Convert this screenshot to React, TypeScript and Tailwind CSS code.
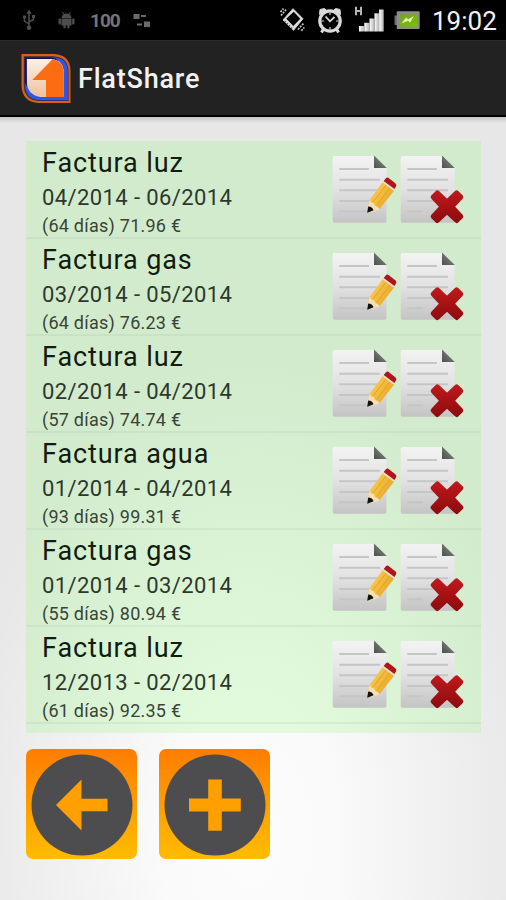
import React from 'react';

type Bill = {
  name: string;
  period: string;
  detail: string;
};

const bills: Bill[] = [
  { name: 'Factura luz', period: '04/2014 - 06/2014', detail: '(64 días) 71.96 €' },
  { name: 'Factura gas', period: '03/2014 - 05/2014', detail: '(64 días) 76.23 €' },
  { name: 'Factura luz', period: '02/2014 - 04/2014', detail: '(57 días) 74.74 €' },
  { name: 'Factura agua', period: '01/2014 - 04/2014', detail: '(93 días) 99.31 €' },
  { name: 'Factura gas', period: '01/2014 - 03/2014', detail: '(55 días) 80.94 €' },
  { name: 'Factura luz', period: '12/2013 - 02/2014', detail: '(61 días) 92.35 €' },
];

// Shared gradients, referenced by id from the icons below
function Gradients() {
  return (
    <svg className="absolute w-0 h-0" aria-hidden="true">
      <defs>
        <linearGradient id="paper" x1="0" y1="0" x2="0" y2="1">
          <stop offset="0" stopColor="#f3f3f3" />
          <stop offset="0.5" stopColor="#e2e2e2" />
          <stop offset="1" stopColor="#c4c4c4" />
        </linearGradient>
        <linearGradient id="fold" x1="0" y1="1" x2="1" y2="0">
          <stop offset="0" stopColor="#4c504c" />
          <stop offset="1" stopColor="#8b938b" />
        </linearGradient>
        <linearGradient id="wood" x1="0" y1="0" x2="1" y2="0.7">
          <stop offset="0" stopColor="#f9d470" />
          <stop offset="0.5" stopColor="#f5bd3c" />
          <stop offset="1" stopColor="#e0a028" />
        </linearGradient>
        <linearGradient id="cross" x1="0" y1="38" x2="0" y2="71" gradientUnits="userSpaceOnUse">
          <stop offset="0" stopColor="#c01a1c" />
          <stop offset="1" stopColor="#8c0b0d" />
        </linearGradient>
        <linearGradient id="cream" x1="0" y1="0" x2="0" y2="1">
          <stop offset="0" stopColor="#faf0e6" />
          <stop offset="1" stopColor="#eec29c" />
        </linearGradient>
        <linearGradient id="bars" x1="0" y1="0" x2="1" y2="0">
          <stop offset="0" stopColor="#ffffff" />
          <stop offset="1" stopColor="#b0b0b0" />
        </linearGradient>
        <linearGradient id="charge" x1="0" y1="0" x2="1" y2="1">
          <stop offset="0" stopColor="#7d9c2c" />
          <stop offset="1" stopColor="#74c400" />
        </linearGradient>
      </defs>
    </svg>
  );
}

function Paper({ lastLine }: { lastLine: number }) {
  return (
    <>
      <path d="M2.5 4H42V16H54.5V69Q54.5 70.7 52.8 70.7H2.4Q.7 70.7 .7 69V5.8Q.7 4 2.5 4Z" fill="url(#paper)" />
      <path d="M42 3.6L54.8 16H42Z" fill="url(#fold)" />
      <g stroke="#c5c5c7" strokeWidth="2">
        <path d="M7.3 17H37" />
        <path d="M7.3 27.7H48" />
        <path d="M7.3 38.3H48" />
        <path d="M7.3 49H40" />
        <path d={`M7.3 59.3H${lastLine}`} />
      </g>
    </>
  );
}

function EditIcon() {
  return (
    <svg className="w-[68px] h-[74px]" viewBox="0 0 68 74">
      <Paper lastLine={36} />
      <path d="M51 29.8L62.4 38.2L47.5 57.3L35.4 60.8L37.2 48.5Z" fill="url(#wood)" />
      <path d="M54.6 32.5L40.6 50.5M58.3 35.2L44.8 53.5" stroke="#dd9f2a" strokeWidth=".9" />
      <path d="M37.4 48L35.8 57L39 60.2L48 57.2L45.2 54.8L43.4 53.9L41.6 51L39.4 50.6Z" fill="#f5dfb4" />
      <path d="M36.2 54.6L35.2 60.8L41.6 58.3Q40.3 54.8 36.2 54.6Z" fill="#111" />
      <path d="M50.6 30.4L53.2 27.2L63.8 35.6L61.6 38.8Z" fill="#e6ddd6" />
      <path d="M51.7 28.9L53.9 26.2Q55 25 56.3 25.8L63.6 31.4Q65 32.8 64 34.4L62.4 37Z" fill="#b0151a" />
    </svg>
  );
}

function DeleteIcon() {
  return (
    <svg className="w-[66px] h-[74px]" viewBox="0 0 66 74">
      <Paper lastLine={23} />
      <path
        d="M37.3 40.9L47 50L56.7 40.9L60.8 45L51.7 54.7L60.8 64.4L56.7 68.5L47 59.4L37.3 68.5L33.2 64.4L42.3 54.7L33.2 45Z"
        fill="url(#cross)"
        stroke="url(#cross)"
        strokeWidth="5"
        strokeLinejoin="round"
      />
    </svg>
  );
}

function StatusBar() {
  return (
    <div className="h-10 bg-black flex items-center justify-between pl-[22px] pr-[9px]">
      <div className="flex items-center text-[#747474]">
        <svg className="w-[14px] h-[22px]" viewBox="0 0 14 22" fill="none" stroke="#4d4d4d" strokeWidth="1.5">
          <path d="M7 3V18M7 15L2.5 12V8.5M7 13L11.5 10.5V7.5" />
          <path d="M7 .5L9.8 4.8H4.2Z" fill="#4d4d4d" stroke="none" />
          <circle cx="7" cy="18.7" r="2.3" fill="#4d4d4d" stroke="none" />
          <circle cx="2.5" cy="8" r="1.7" fill="#4d4d4d" stroke="none" />
          <path d="M10 6H13V9H10Z" fill="#4d4d4d" stroke="none" />
        </svg>
        <svg className="ml-[22px] w-[17px] h-[18px]" viewBox="0 0 17 18" fill="#4d4d4d">
          <path d="M3.5 7Q4 2.5 8.5 2.5T13.5 7Z" />
          <path d="M4.5 .8L6 3.5M12.5 .8L11 3.5" stroke="#4d4d4d" />
          <path d="M3.5 7.6H13.5V14.5H11.5V17.3H9.4V14.5H7.6V17.3H5.5V14.5H3.5Z" />
          <rect x=".5" y="7.5" width="2.4" height="6" rx="1.1" />
          <rect x="14.1" y="7.5" width="2.4" height="6" rx="1.1" />
        </svg>
        <span className="ml-[15px] w-[30px] text-[19px] leading-none font-bold tracking-[-1px]">100</span>
        <svg className="ml-[13px] w-[18px] h-[16px]" viewBox="0 0 18 16" fill="#6b6b6b">
          <path d="M.5 2H6.5V7H.5ZM11 9.5H17V15H11ZM8 3H13V5H8ZM4 11.5H9V13.5H4Z" />
        </svg>
      </div>

      <div className="flex items-center">
        <svg className="ml-px w-[26px] h-[26px]" viewBox="0 0 26 26" fill="none" stroke="#cfcfcf">
          <path d="M14 1.7L24 11.7L14.5 23.3L4 13Z" fill="#dedede" strokeLinejoin="round" />
          <path d="M14.7 4.8L21.3 11.8L14.3 18.9L7.3 11.7Z" fill="#000" stroke="none" />
          <path d="M5.6 14.2L13.6 21.8" stroke="#555" strokeWidth="1.4" strokeDasharray="1.5 1.5" />
          <path d="M2 8.5L7 2.5M1.5 5L4.5 1.5M19 22.5L24.5 16.5M22.3 23.8L25.3 20.5" strokeWidth="1.6" strokeDasharray="2 1" />
        </svg>
        <svg className="ml-[12px] w-[26px] h-[28px]" viewBox="0 0 26 28" fill="none" stroke="#d9d9d9">
          <circle cx="13" cy="15" r="10.2" strokeWidth="3.2" />
          <path d="M2.5 8.5L3 3.5L7.5 2.5L9.5 4.5ZM23.5 8.5L23 3.5L18.5 2.5L16.5 4.5Z" fill="#d9d9d9" />
          <path d="M6.5 23L4.5 26.5M19.5 23L21.5 26.5" strokeWidth="3" />
          <path d="M8.5 10.5L13 15.3L17.5 11" strokeWidth="1.8" />
          <path d="M13 6.5V9M13 21V23.5M4.5 15H7M19 15H21.5" strokeWidth="1.2" />
        </svg>
        <svg className="ml-[11px] w-[30px] h-[28px]" viewBox="0 0 30 28">
          <path d="M2 .7V9.3M7 .7V9.3M2 5H7" stroke="#b5b5b5" strokeWidth="2" />
          <g fill="url(#bars)">
            <rect x="5" y="20" width="5.3" height="5.5" />
            <rect x="10.3" y="16.8" width="5.2" height="8.7" />
            <rect x="15.5" y="12.5" width="5" height="13" />
            <rect x="20.5" y="7.3" width="4.6" height="18.2" />
            <rect x="25.1" y="3.5" width="4.6" height="22" />
          </g>
        </svg>
        <svg className="ml-[10px] w-[26px] h-[20px]" viewBox="0 0 26 20">
          <rect x=".5" y="5.5" width="4" height="9.5" fill="#6c7065" />
          <rect x="2.7" y="1.3" width="23" height="17.8" rx="1.2" fill="#8c8c8c" />
          <rect x="5.7" y="4.3" width="17.6" height="12.4" fill="url(#charge)" />
          <path d="M7.5 13.5L12.3 7.3L13.8 9.6L20 6L16 12.8L14.2 10.8Z" fill="#e2f5b0" />
        </svg>
        <span className="ml-[12px] w-[65px] pt-px text-[26px] leading-none text-[#f2f2f2]">19:02</span>
      </div>
    </div>
  );
}

function ActionBar() {
  return (
    <header className="h-[77px] bg-[#222] border-t border-[#292929] border-b-2 border-b-black flex items-center pl-[21px]">
      <svg className="mt-px w-[50px] h-[51px]" viewBox="0 0 50 51">
        <path d="M.5 1H33Q49.5 2 49.5 18V50H17Q1.5 49 .5 33Z" fill="#d8601a" />
        <path d="M2.8 3.2H32Q47.5 4 47.5 19V48H18Q3 47 2.8 32Z" fill="#3a2a38" />
        <path d="M3.8 4.2H32Q46.8 5 46.8 19V47.2H18Q4.5 46 3.8 32Z" fill="#2a58ee" />
        <path d="M3.8 4.2H31Q35 5 37 8L9 36Q4.5 33 3.8 29Z" fill="#170e60" />
        <path d="M5.9 6.1H30.5Q42.8 7.5 42.8 20V43.9H19Q6.5 41.5 5.9 30Z" fill="url(#cream)" />
        <path d="M31.5 6.2Q42.8 8.5 42.8 20V43.9H25V27H11.3Z" fill="#fc6c12" />
      </svg>
      <h1 className="ml-[7px] pt-[3px] text-[27px] leading-none font-medium tracking-[0.8px] text-[#f2f2f2]">FlatShare</h1>
    </header>
  );
}

function BillRow({ bill }: { bill: Bill }) {
  return (
    <li className="h-[97px] border-b-2 border-[#99a5aa]/15 flex justify-between pl-4 pr-[15px]">
      <div className="pt-[2px] text-[#101c10] whitespace-nowrap">
        <p className="text-[27px] leading-[38px] tracking-[0.9px]">{bill.name}</p>
        <p className="text-[22px] leading-[31px] tracking-[0.4px] text-[#2c382c]">{bill.period}</p>
        <p className="text-[18px] leading-[25px] tracking-[0.25px] text-[#384438]">{bill.detail}</p>
      </div>
      <div className="flex pt-[10px]">
        <button className="block h-[74px]" aria-label="Editar">
          <EditIcon />
        </button>
        <button className="block h-[74px]" aria-label="Borrar">
          <DeleteIcon />
        </button>
      </div>
    </li>
  );
}

function RoundButton({ label, path }: { label: string; path: string }) {
  return (
    <button
      className="w-[111px] h-[110px] rounded-[7px] bg-linear-to-b from-[#ff7c00] to-[#ffbc00] flex items-center justify-center"
      aria-label={label}
    >
      <svg className="mt-px w-[102px] h-[102px]" viewBox="0 0 102 102">
        <circle cx="51" cy="51" r="50.5" fill="#4d4d4f" />
        <path d={path} fill="#ff9f00" />
      </svg>
    </button>
  );
}

export default function App() {
  return (
    <div className="w-[506px] h-[900px] overflow-hidden font-[Roboto,sans-serif] bg-[radial-gradient(ellipse_290px_480px_at_250px_840px,#fcfcfc_0%,#fafafa_30%,#e7e7e7_100%)]">
      <Gradients />
      <StatusBar />
      <ActionBar />
      <div className="h-[6px] bg-linear-to-b from-black/15 to-transparent" />

      <main className="pl-[26px] pr-[25px] pt-[18px]">
        <ul className="h-[592px] pt-px bg-[radial-gradient(ellipse_290px_480px_at_224px_699px,#e4fbde_0%,#e2fadc_30%,#d3ebcd_100%)]">
          {bills.map((bill, index) => (
            <BillRow key={index} bill={bill} />
          ))}
        </ul>

        <div className="mt-4 flex gap-[22px]">
          <RoundButton label="Volver" path="M25 51L50.5 25.5V44.7H76.5V57.3H50.5V76.5Z" />
          <RoundButton label="Añadir" path="M44.2 25.5H57.8V44.6H76.8V57.4H57.8V76.8H44.2V57.4H25V44.6H44.2Z" />
        </div>
      </main>
    </div>
  );
}
